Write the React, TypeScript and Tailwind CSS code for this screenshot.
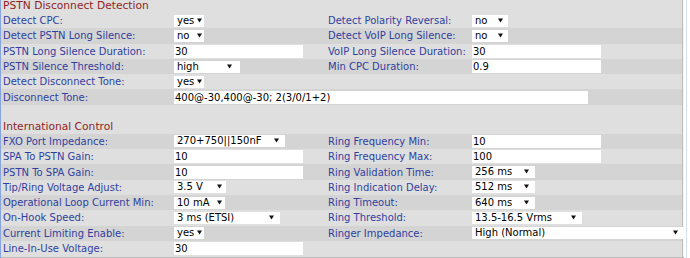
import React from 'react';

type Shade = 'light' | 'dark';

interface ISelect {
  value: string;
  width: number;
  arrow?: number;
}

interface IField {
  label: string;
  input?: string;
  select?: ISelect;
  wide?: boolean;
}

interface IRow {
  left: IField;
  right?: IField;
}

const pstnRows: IRow[] = [
  {
    left: { label: 'Detect CPC:', select: { value: 'yes', width: 30, arrow: 2 } },
    right: { label: 'Detect Polarity Reversal:', select: { value: 'no', width: 36, arrow: 5 } },
  },
  {
    left: { label: 'Detect PSTN Long Silence:', select: { value: 'no', width: 30, arrow: 2 } },
    right: { label: 'Detect VoIP Long Silence:', select: { value: 'no', width: 36, arrow: 5 } },
  },
  {
    left: { label: 'PSTN Long Silence Duration:', input: '30' },
    right: { label: 'VoIP Long Silence Duration:', input: '30' },
  },
  {
    left: { label: 'PSTN Silence Threshold:', select: { value: 'high', width: 66, arrow: 8 } },
    right: { label: 'Min CPC Duration:', input: '0.9' },
  },
  {
    left: { label: 'Detect Disconnect Tone:', select: { value: 'yes', width: 30, arrow: 2 } },
  },
  {
    left: { label: 'Disconnect Tone:', input: '400@-30,400@-30; 2(3/0/1+2)', wide: true },
  },
];

const intlRows: IRow[] = [
  {
    left: { label: 'FXO Port Impedance:', select: { value: '270+750||150nF', width: 111, arrow: 6 } },
    right: { label: 'Ring Frequency Min:', input: '10' },
  },
  {
    left: { label: 'SPA To PSTN Gain:', input: '10' },
    right: { label: 'Ring Frequency Max:', input: '100' },
  },
  {
    left: { label: 'PSTN To SPA Gain:', input: '10' },
    right: { label: 'Ring Validation Time:', select: { value: '256 ms', width: 63, arrow: 6 } },
  },
  {
    left: { label: 'Tip/Ring Voltage Adjust:', select: { value: '3.5 V', width: 52, arrow: 4 } },
    right: { label: 'Ring Indication Delay:', select: { value: '512 ms', width: 63, arrow: 6 } },
  },
  {
    left: { label: 'Operational Loop Current Min:', select: { value: '10 mA', width: 51, arrow: 3 } },
    right: { label: 'Ring Timeout:', select: { value: '640 ms', width: 63, arrow: 6 } },
  },
  {
    left: { label: 'On-Hook Speed:', select: { value: '3 ms (ETSI)', width: 106, arrow: 6 } },
    right: { label: 'Ring Threshold:', select: { value: '13.5-16.5 Vrms', width: 110, arrow: 6 } },
  },
  {
    left: { label: 'Current Limiting Enable:', select: { value: 'yes', width: 30, arrow: 2 } },
    right: { label: 'Ringer Impedance:', select: { value: 'High (Normal)', width: 211, arrow: 5 } },
  },
  {
    left: { label: 'Line-In-Use Voltage:', input: '30' },
  },
];

function FakeSelect({ value, width, arrow = 6 }: ISelect) {
  return (
    <div
      className="relative h-[12px] bg-white pl-[3px] leading-[12px] text-black whitespace-nowrap overflow-hidden"
      style={{ width }}
    >
      {value}
      <svg
        width="5"
        height="5"
        viewBox="0 0 5 5"
        className="absolute top-[3px]"
        style={{ right: arrow }}
      >
        <polygon points="0,0.5 5,0.5 2.5,4.5" fill="#111" />
      </svg>
    </div>
  );
}

function TextBox({ value, wide }: { value: string; wide?: boolean }) {
  return (
    <div
      className={`h-[13px] bg-white pl-[1px] leading-[13px] text-black whitespace-nowrap ${
        wide ? 'w-[414px]' : 'w-[129px]'
      }`}
    >
      {value}
    </div>
  );
}

function Value({ field }: { field?: IField }) {
  if (!field) return null;
  if (field.select) return <FakeSelect {...field.select} />;
  return <TextBox value={field.input || ''} wide={field.wide} />;
}

function FieldRow({ row, shade }: { row: IRow; shade: Shade }) {
  const bg = shade === 'dark' ? 'bg-[#d4d4d4]' : 'bg-[#dfdfdf]';
  if (row.left.wide) {
    return (
      <div className={`flex h-[15.3px] items-center ${bg}`}>
        <div className="w-[173px] pl-[2px] text-[#2f3f9f]">{row.left.label}</div>
        <Value field={row.left} />
      </div>
    );
  }
  return (
    <div className={`flex h-[15.3px] items-center ${bg}`}>
      <div className="w-[173px] shrink-0 pl-[2px] text-[#2f3f9f] whitespace-nowrap">
        {row.left.label}
      </div>
      <div className="w-[152px] shrink-0">
        <Value field={row.left} />
      </div>
      <div className="w-[146px] shrink-0 pl-[2px] text-[#2f3f9f] whitespace-nowrap">
        {row.right?.label}
      </div>
      <div className="flex-1">
        <Value field={row.right} />
      </div>
    </div>
  );
}

function SectionTitle({ title, tall }: { title: string; tall?: boolean }) {
  return (
    <div
      className={`flex items-center bg-[#dfdfdf] pl-[2px] text-[10.7px] text-[#8f1f1f] ${
        tall ? 'h-[14px]' : 'h-[13px]'
      }`}
    >
      {title}
    </div>
  );
}

export default function App() {
  return (
    <div className="flex w-[690px] h-[258px] bg-white font-['DejaVu_Sans',Verdana,sans-serif] text-[10px] overflow-hidden">
      <div className="w-[684px] h-[258px] border-l border-b border-[#86a5da] bg-[#f4f6fa]">
        <div className="w-[682px] border-r border-b border-[#bcbcbc] bg-[#dfdfdf]">
          <SectionTitle title="PSTN Disconnect Detection" />
          {pstnRows.map((row, i) => (
            <FieldRow key={row.left.label} row={row} shade={i % 2 === 0 ? 'light' : 'dark'} />
          ))}
          {/* spacer row */}
          <div className="h-[15px] bg-[#dfdfdf]" />
          <SectionTitle title="International Control" tall />
          {intlRows.map((row, i) => (
            <FieldRow key={row.left.label} row={row} shade={i % 2 === 0 ? 'dark' : 'light'} />
          ))}
          <div className="h-[1px]" />
        </div>
      </div>
      <div className="w-[2px]" />
      <div className="w-[1px] h-full bg-[#d3dff2]" />
    </div>
  );
}
